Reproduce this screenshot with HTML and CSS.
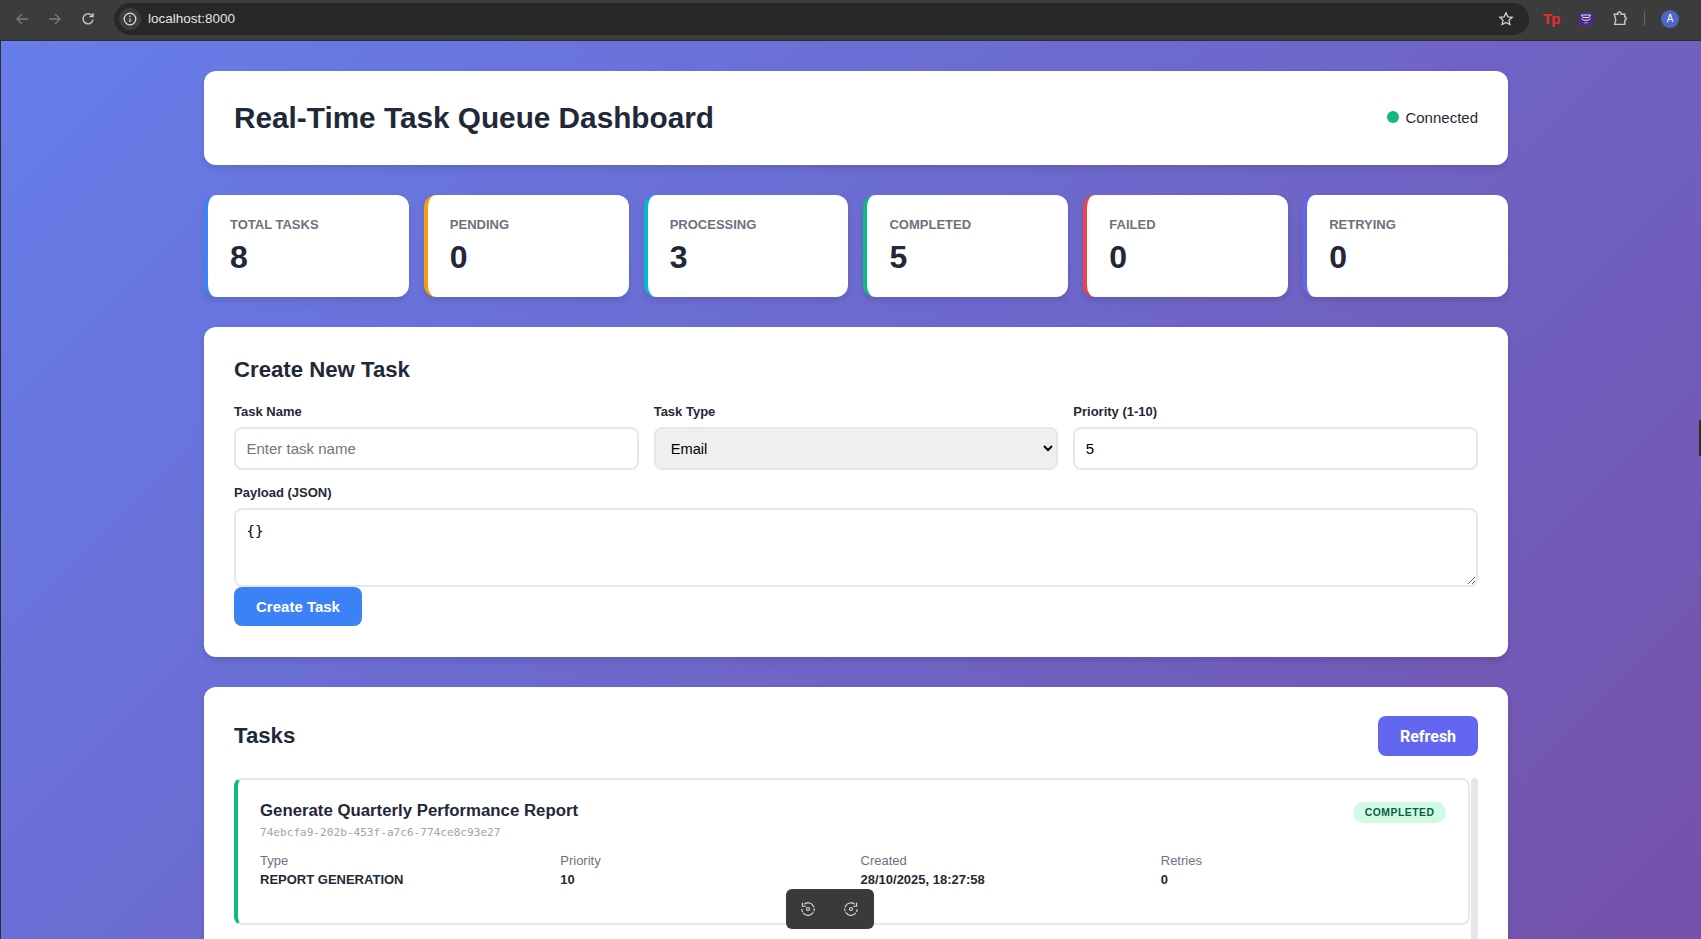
FILE: index.html
```html
<!DOCTYPE html>
<html lang="en">

<head>
    <meta charset="UTF-8">
    <meta name="viewport" content="width=device-width, initial-scale=1.0">
    <title>Real-Time Task Queue Dashboard</title>
    <link rel="stylesheet" href="styles.css">
</head>

<body>
    <div class="toolbar">
        <svg class="nav-icon dim" viewBox="0 0 16 16"><path d="M14 8H3M8 3L3 8l5 5"/></svg>
        <svg class="nav-icon dim fwd" viewBox="0 0 16 16"><path d="M2 8h11M8 3l5 5-5 5"/></svg>
        <svg class="nav-icon reload" viewBox="0 0 16 16"><path d="M13 8.5A5 5 0 1 1 11.5 4.2L13 5.6M13 2v3.6H9.4"/></svg>
        <div class="omnibox">
            <span class="info-chip">
                <svg viewBox="0 0 16 16"><circle cx="8" cy="8" r="5.8"/><path d="M8 7.2v3.8M8 4.6v1.4"/></svg>
            </span>
            <span class="url">localhost:8000</span>
            <svg class="star" viewBox="0 0 16 16"><path d="M8 1.8l1.9 4 4.3.5-3.2 3 .9 4.3L8 11.4l-3.9 2.2.9-4.3-3.2-3 4.3-.5z"/></svg>
        </div>
        <span class="ext-tp">Tp</span>
        <svg class="ext-box" viewBox="0 0 14 14"><rect width="14" height="14" fill="#4a2a8c"/><path d="M2.5 3h9L10 5.5H4zM2.5 6.5c1 2.5 8 2.5 9 0" fill="none" stroke="#e8e4f4" stroke-width="1"/><path d="M5 10.8h4" stroke="#c98a4a" stroke-width="1.2"/></svg>
        <svg class="puzzle" viewBox="0 0 16 16"><path d="M2 4h3.5a1.6 1.6 0 0 1 3 -1.2V4H12v2.6a1.5 1.5 0 0 1 0 3V13.5H2.5L3.6 9.5 2 4z"/></svg>
        <span class="divider"></span>
        <span class="avatar">A</span>
    </div>

    <div class="page">
        <div class="container">
            <header class="card header">
                <h1>Real-Time Task Queue Dashboard</h1>
                <div class="status"><span class="dot"></span>Connected</div>
            </header>

            <div class="stats">
                <div class="stat total"><div class="stat-label">Total Tasks</div><div class="stat-value">8</div></div>
                <div class="stat pending"><div class="stat-label">Pending</div><div class="stat-value">0</div></div>
                <div class="stat processing"><div class="stat-label">Processing</div><div class="stat-value">3</div></div>
                <div class="stat completed"><div class="stat-label">Completed</div><div class="stat-value">5</div></div>
                <div class="stat failed"><div class="stat-label">Failed</div><div class="stat-value">0</div></div>
                <div class="stat retrying"><div class="stat-label">Retrying</div><div class="stat-value">0</div></div>
            </div>

            <section class="card form-card">
                <h2>Create New Task</h2>
                <div class="form-row">
                    <div class="field">
                        <label for="name">Task Name</label>
                        <input id="name" type="text" placeholder="Enter task name">
                    </div>
                    <div class="field">
                        <label for="type">Task Type</label>
                        <select id="type">
                            <option>Email</option>
                            <option>Report Generation</option>
                        </select>
                    </div>
                    <div class="field">
                        <label for="priority">Priority (1-10)</label>
                        <input id="priority" type="number" value="5">
                    </div>
                </div>
                <div class="field">
                    <label for="payload">Payload (JSON)</label>
                    <textarea id="payload">{}</textarea>
                </div>
                <button class="btn-create">Create Task</button>
            </section>

            <section class="card tasks-card">
                <div class="tasks-head">
                    <h2>Tasks</h2>
                    <button class="btn-refresh">Refresh</button>
                </div>
                <div class="task-list">
                    <div class="task">
                        <div class="task-top">
                            <div>
                                <div class="task-name">Generate Quarterly Performance Report</div>
                                <div class="task-id">74ebcfa9-202b-453f-a7c6-774ce8c93e27</div>
                            </div>
                            <span class="badge">Completed</span>
                        </div>
                        <div class="task-meta">
                            <div><div class="meta-label">Type</div><div class="meta-value">REPORT GENERATION</div></div>
                            <div><div class="meta-label">Priority</div><div class="meta-value">10</div></div>
                            <div><div class="meta-label">Created</div><div class="meta-value">28/10/2025, 18:27:58</div></div>
                            <div><div class="meta-label">Retries</div><div class="meta-value">0</div></div>
                        </div>
                    </div>
                    <div class="scrollbar"></div>
                </div>
            </section>
        </div>

        <div class="edge-notch"></div>
        <div class="player">
            <svg viewBox="0 0 16 16"><path class="dash" d="M4.2 3.2A6.2 6.2 0 1 1 1.8 8"/><path d="M2.4 1.8v3.4h3.4"/><circle cx="8" cy="8" r="1.5"/></svg>
            <svg viewBox="0 0 16 16"><path class="dash" d="M11.8 3.2A6.2 6.2 0 1 0 14.2 8"/><path d="M13.6 1.8v3.4h-3.4"/><circle cx="8" cy="8" r="1.5"/></svg>
        </div>
    </div>
</body>

</html>
```

FILE: styles.css
```css
* {
    box-sizing: border-box;
}

body {
    margin: 0;
    height: 939px;
    overflow: hidden;
    background: #3c3c3c;
    font-family: "Liberation Sans", Arial, sans-serif;
    color: #1f2937;
}

/* browser chrome */
.toolbar {
    height: 41px;
    display: flex;
    align-items: center;
    padding: 0 0 3px 14px;
    background: #3c3c3c;
    border-bottom: 1px solid #2e2e2e;
}

.nav-icon {
    width: 16px;
    height: 16px;
    margin-right: 17px;
    fill: none;
    stroke: #c8c8c8;
    stroke-width: 1.4;
}

.nav-icon.dim {
    stroke: #7a7a7a;
}

.nav-icon.reload {
    margin-right: 0;
}

.omnibox {
    width: 1415px;
    height: 32px;
    margin-left: 18px;
    display: flex;
    align-items: center;
    background: #282828;
    border-radius: 16px;
    padding: 0 15px 0 5px;
}

.info-chip {
    width: 22px;
    height: 22px;
    border-radius: 50%;
    background: #3c3c3c;
    display: flex;
    align-items: center;
    justify-content: center;
}

.info-chip svg {
    width: 16px;
    height: 16px;
    fill: none;
    stroke: #e2e2e2;
    stroke-width: 1.2;
}

.url {
    margin-left: 7px;
    font-size: 13.5px;
    color: #e3e3e3;
    flex: 1;
}

.star {
    width: 16px;
    height: 16px;
    fill: none;
    stroke: #d0d0d0;
    stroke-width: 1.3;
}

.ext-tp {
    margin-left: 14px;
    width: 16px;
    font-size: 15px;
    font-weight: bold;
    letter-spacing: -1px;
    color: #ee2a35;
}

.ext-box {
    width: 14px;
    height: 14px;
    margin-left: 20px;
}

.puzzle {
    width: 17px;
    height: 17px;
    margin-left: 19px;
    fill: none;
    stroke: #c8c8c8;
    stroke-width: 1.3;
}

.divider {
    width: 1px;
    height: 15px;
    margin-left: 15px;
    background: #666;
}

.avatar {
    width: 18px;
    height: 18px;
    margin-left: 16px;
    border-radius: 50%;
    background: #5166c4;
    color: #fff;
    font-size: 10px;
    display: flex;
    align-items: center;
    justify-content: center;
}

/* page */
.page {
    position: relative;
    height: 898px;
    overflow: hidden;
    padding: 30px 0 0 204px;
    background: linear-gradient(135deg, #667eea 0%, #764ba2 100%) no-repeat;
    background-size: 100% 1230px;
    border-left: 1px solid #2e2e2e;
}

.container {
    width: 1304px;
    margin-left: -1px;
}

.card {
    background: #fff;
    border-radius: 12px;
    box-shadow: 0 4px 6px rgba(0, 0, 0, 0.1);
    padding: 30px;
    margin-bottom: 30px;
}

.header {
    height: 94px;
    display: flex;
    justify-content: space-between;
    align-items: center;
}

h1 {
    margin: 0;
    font-size: 29.75px;
}

h2 {
    margin: 0;
    font-size: 22.2px;
    line-height: 26px;
}

.status {
    display: flex;
    align-items: center;
    gap: 6px;
    font-size: 15px;
    margin-top: -2px;
}

.dot {
    width: 12px;
    height: 12px;
    border-radius: 50%;
    background: #10b981;
}

.stats {
    display: grid;
    grid-template-columns: repeat(6, 1fr);
    gap: 15px;
    margin-bottom: 30px;
}

.stat {
    height: 102px;
    background: #fff;
    border-radius: 12px;
    border-left: 4px solid #3b82f6;
    padding: 22px;
    box-shadow: 0 4px 6px rgba(0, 0, 0, 0.1);
}

.stat.pending { border-left-color: #f59e0b; }
.stat.processing { border-left-color: #06b6d4; }
.stat.completed { border-left-color: #10b981; }
.stat.failed { border-left-color: #ef4444; }
.stat.retrying { border-left-color: #6366f1; }

.stat-label {
    font-size: 13px;
    font-weight: bold;
    text-transform: uppercase;
    color: #6b7280;
}

.stat-value {
    margin-top: 7px;
    font-size: 32px;
    font-weight: bold;
}

.form-card {
    height: 330px;
}

.form-card h2 {
    margin-bottom: 21px;
}

.form-row {
    display: grid;
    grid-template-columns: repeat(3, 1fr);
    gap: 15px;
    margin-bottom: 15px;
}

label {
    display: block;
    margin-bottom: 8px;
    font-size: 13px;
    font-weight: bold;
}

input,
select,
textarea {
    display: block;
    width: 100%;
    height: 43px;
    padding: 11px 10.5px;
    border: 2px solid #e5e7eb;
    border-radius: 8px;
    font-family: "Liberation Sans", Arial, sans-serif;
    font-size: 15px;
    color: #000;
}

select {
    padding: 11px;
    font-size: 14.67px;
    background: #efefef;
}

textarea {
    height: 79px;
    padding-top: 13px;
    font-family: "DejaVu Sans Mono", monospace;
    font-size: 14px;
}

.btn-create {
    display: block;
    width: 128px;
    height: 39px;
    background: #3b82f6;
    color: #fff;
    border: 0;
    border-radius: 8px;
    font-family: inherit;
    font-size: 15px;
    font-weight: bold;
}

.tasks-card {
    height: 300px;
    padding-top: 29px;
    margin-bottom: 0;
}

.tasks-head {
    display: flex;
    justify-content: space-between;
    align-items: center;
    margin-bottom: 22px;
}

.btn-refresh {
    width: 100px;
    height: 40px;
    background: #6366f1;
    color: #fff;
    border: 0;
    border-radius: 8px;
    font-family: Roboto, sans-serif;
    font-size: 16px;
    font-weight: 700;
}

.task-list {
    display: flex;
}

.task {
    flex: 1;
    height: 147px;
    border: 2px solid #e5e7eb;
    border-left: 4px solid #10b981;
    border-radius: 8px;
    padding: 21px 22px;
}

.scrollbar {
    width: 7px;
    height: 170px;
    margin-left: 1px;
    background: #e5e7eb;
    border-radius: 4px 4px 0 0;
}

.task-top {
    display: flex;
    justify-content: space-between;
    align-items: flex-start;
}

.task-name {
    font-size: 16.8px;
    font-weight: bold;
}

.task-id {
    margin-top: 5px;
    font-family: "DejaVu Sans Mono", monospace;
    font-size: 11.1px;
    color: #9ca3af;
}

.badge {
    margin-top: 1px;
    padding: 0 11.5px;
    height: 21px;
    line-height: 21px;
    border-radius: 11px;
    background: #d1fae5;
    color: #065f46;
    font-size: 10.4px;
    font-weight: bold;
    letter-spacing: 0.5px;
    text-transform: uppercase;
}

.task-meta {
    display: grid;
    grid-template-columns: repeat(4, 1fr);
    gap: 15px;
    margin-top: 14px;
}

.meta-label {
    font-size: 13px;
    color: #6b7280;
}

.meta-value {
    margin-top: 4px;
    font-size: 13px;
    font-weight: bold;
}

/* things sitting over the page */
.edge-notch {
    position: absolute;
    right: 0;
    top: 379px;
    width: 2px;
    height: 36px;
    background: #2e2e2e;
}

.player {
    position: absolute;
    left: 785px;
    top: 848px;
    width: 88px;
    height: 40px;
    display: flex;
    align-items: center;
    gap: 27px;
    padding: 0 14px;
    background: #3a3a3a;
    border-radius: 6px;
}

.player svg {
    width: 16px;
    height: 16px;
    fill: none;
    stroke: #dcdcdc;
    stroke-width: 1.1;
}

.player .dash {
    stroke-dasharray: 12 1 3 1;
}
```
